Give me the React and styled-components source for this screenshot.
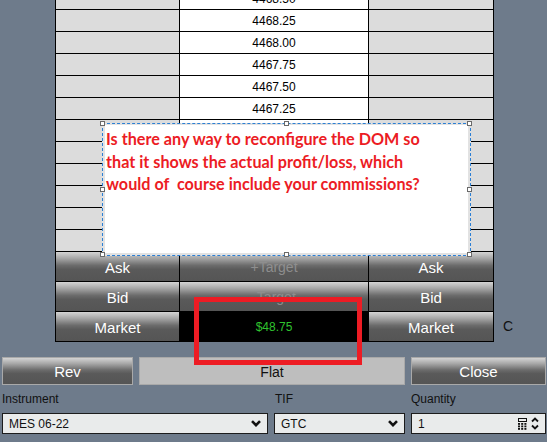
import React from 'react';
import styled, { createGlobalStyle } from 'styled-components';

const Global = createGlobalStyle`
  html, body { margin: 0; padding: 0; background: #6e7b8b; }
  body { font-family: "Liberation Sans", Arial, sans-serif; overflow: hidden; }
  * { box-sizing: border-box; }
`;

const Page = styled.div`
  position: relative;
  width: 547px;
  height: 442px;
  overflow: hidden;
  background: #6e7b8b;
  display: flex;
  flex-direction: column;
`;

const DomArea = styled.div`
  display: flex;
  height: 342px;
  overflow: hidden;
  padding-left: 55px;
  flex: none;
`;

const Dom = styled.div`
  display: grid;
  grid-template-columns: 123px 188px 124px;
  grid-template-rows: repeat(12, 21px) repeat(3, 29px);
  gap: 1px;
  background: #000;
  border: 1px solid #000;
  margin-top: -13px;
  align-self: flex-start;
  flex: none;
`;

const SideCell = styled.div`
  background: #dcdcdc;
`;

const PriceCell = styled.div`
  background: #fff;
  display: flex;
  align-items: center;
  justify-content: center;
  font-size: 12px;
  color: #000;
`;

const buttonGradient = `linear-gradient(#d4d4d4 0%, #a6a6a6 22%, #6c6c6c 46%, #5a5a5a 60%, #555 100%)`;

const ActionCell = styled.div`
  background: ${buttonGradient};
  display: flex;
  align-items: center;
  justify-content: center;
  font-size: 15px;
  color: #fff;
  padding-top: 1px;
`;

const TargetCell = styled(ActionCell)`
  color: #8e8e8e;
  font-size: 14px;
`;

const PnlCell = styled.div`
  background: #000;
  display: flex;
  align-items: center;
  justify-content: center;
  font-size: 12px;
  color: #2fc32f;
`;

const SideLabel = styled.div`
  align-self: flex-end;
  height: 29px;
  line-height: 29px;
  margin: 0 0 1px 9px;
  font-size: 14px;
  color: #111;
`;

const ActionBar = styled.div`
  display: grid;
  grid-template-columns: 131px 1fr 135px;
  gap: 6px;
  padding: 0 1px 0 2px;
  margin-top: 15px;
  height: 28px;
  flex: none;
`;

const BarButton = styled.div`
  border: 1px solid #a9a9a9;
  background: ${p => (p.$flat ? '#bebebe' : buttonGradient)};
  color: ${p => (p.$flat ? '#111' : '#fff')};
  font-size: ${p => (p.$flat ? '14px' : '15px')};
  display: flex;
  align-items: center;
  justify-content: center;
  padding-top: 1px;
`;

const Fields = styled.div`
  display: grid;
  grid-template-columns: 266px 131px 1fr;
  column-gap: 6px;
  padding: 0 1px 0 2px;
  margin-top: 7px;
`;

const Field = styled.div`
  display: flex;
  flex-direction: column;
  gap: 6px;
`;

const Label = styled.div`
  font-size: 12px;
  line-height: 15px;
  color: #111;
  padding-left: ${p => (p.$indent ? '1px' : '0')};
`;

const Select = styled.div`
  height: 21px;
  border: 1px solid #1c1c1c;
  background: #e9ebeb;
  display: flex;
  align-items: center;
  padding: 0 6px 0 6px;
  font-size: 12px;
  color: #111;
  gap: 4px;
`;

const SelectText = styled.span`
  flex: 1;
`;

const IconSvg = styled.svg`
  display: block;
  flex: none;
`;

const NoteBox = styled.div`
  position: absolute;
  left: 102px;
  top: 123px;
  width: 369px;
  height: 133px;
  border: 1px dashed #2b7fd4;
  background: #e2e2e2;
  padding: 1px 2px 2px 2px;
`;

const NoteInner = styled.div`
  width: 100%;
  height: 100%;
  background: #fff;
  padding: 3px 0 0 1px;
  font-family: Lato, "Open Sans", sans-serif;
  font-weight: 700;
  font-size: 16.2px;
  line-height: 22.5px;
  color: #ec1c24;
  white-space: pre;
`;

const Handle = styled.div`
  position: absolute;
  left: ${p => p.$x}%;
  top: ${p => p.$y}%;
  width: 5px;
  height: 5px;
  margin: -3px 0 0 -3px;
  background: #fff;
  border: 1px solid #6a6a6a;
`;

const Highlight = styled.div`
  position: absolute;
  left: 194px;
  top: 297px;
  width: 168px;
  height: 68px;
  border: 5px solid #ed1c24;
`;

/* rows 7-12 lie entirely under the note box, so their prices are not shown */
const prices = [
  '4468.50', '4468.25', '4468.00', '4467.75', '4467.50', '4467.25',
  '', '', '', '', '', '',
];

const handles = [
  [0, 0], [50, 0], [100, 0],
  [0, 50], [100, 50],
  [0, 100], [50, 100], [100, 100],
];

const Chevron = () => (
  <IconSvg width="10" height="7" viewBox="0 0 10 7">
    <polyline points="1,1.2 5,5.2 9,1.2" fill="none" stroke="#111" strokeWidth="2.6" />
  </IconSvg>
);

const Calculator = () => (
  <IconSvg width="9" height="12" viewBox="0 0 9 12">
    <rect x="0.5" y="0.5" width="8" height="3" fill="none" stroke="#111" strokeWidth="1" />
    {[0, 1, 2].map(r =>
      [0, 1, 2].map(c => (
        <rect key={`${r}-${c}`} x={c * 3.2} y={5 + r * 2.5} width="2" height="1.8" fill="#111" />
      ))
    )}
  </IconSvg>
);

const Spinner = () => (
  <IconSvg width="8" height="13" viewBox="0 0 8 13">
    <polyline points="1,4.5 4,1.5 7,4.5" fill="none" stroke="#111" strokeWidth="1.8" />
    <polyline points="1,8.5 4,11.5 7,8.5" fill="none" stroke="#111" strokeWidth="1.8" />
  </IconSvg>
);

export default function App() {
  return (
    <>
      <Global />
      <Page>
        <DomArea>
          <Dom>
            {prices.map((p, i) => (
              <React.Fragment key={i}>
                <SideCell />
                <PriceCell>{p}</PriceCell>
                <SideCell />
              </React.Fragment>
            ))}
            <ActionCell>Ask</ActionCell>
            <TargetCell>+Target</TargetCell>
            <ActionCell>Ask</ActionCell>
            <ActionCell>Bid</ActionCell>
            <TargetCell>-Target</TargetCell>
            <ActionCell>Bid</ActionCell>
            <ActionCell>Market</ActionCell>
            <PnlCell>$48.75</PnlCell>
            <ActionCell>Market</ActionCell>
          </Dom>
          <SideLabel>C</SideLabel>
        </DomArea>
        <ActionBar>
          <BarButton>Rev</BarButton>
          <BarButton $flat>Flat</BarButton>
          <BarButton>Close</BarButton>
        </ActionBar>
        <Fields>
          <Field>
            <Label>Instrument</Label>
            <Select>
              <SelectText>MES 06-22</SelectText>
              <Chevron />
            </Select>
          </Field>
          <Field>
            <Label $indent>TIF</Label>
            <Select>
              <SelectText>GTC</SelectText>
              <Chevron />
            </Select>
          </Field>
          <Field>
            <Label>Quantity</Label>
            <Select>
              <SelectText>1</SelectText>
              <Calculator />
              <Spinner />
            </Select>
          </Field>
        </Fields>
        <NoteBox>
          <NoteInner>
            {'Is there any way to reconfigure the DOM so\nthat it shows the actual profit/loss, which\nwould of  course include your commissions?'}
          </NoteInner>
          {handles.map(([x, y]) => (
            <Handle key={`${x}-${y}`} $x={x} $y={y} />
          ))}
        </NoteBox>
        <Highlight />
      </Page>
    </>
  );
}
